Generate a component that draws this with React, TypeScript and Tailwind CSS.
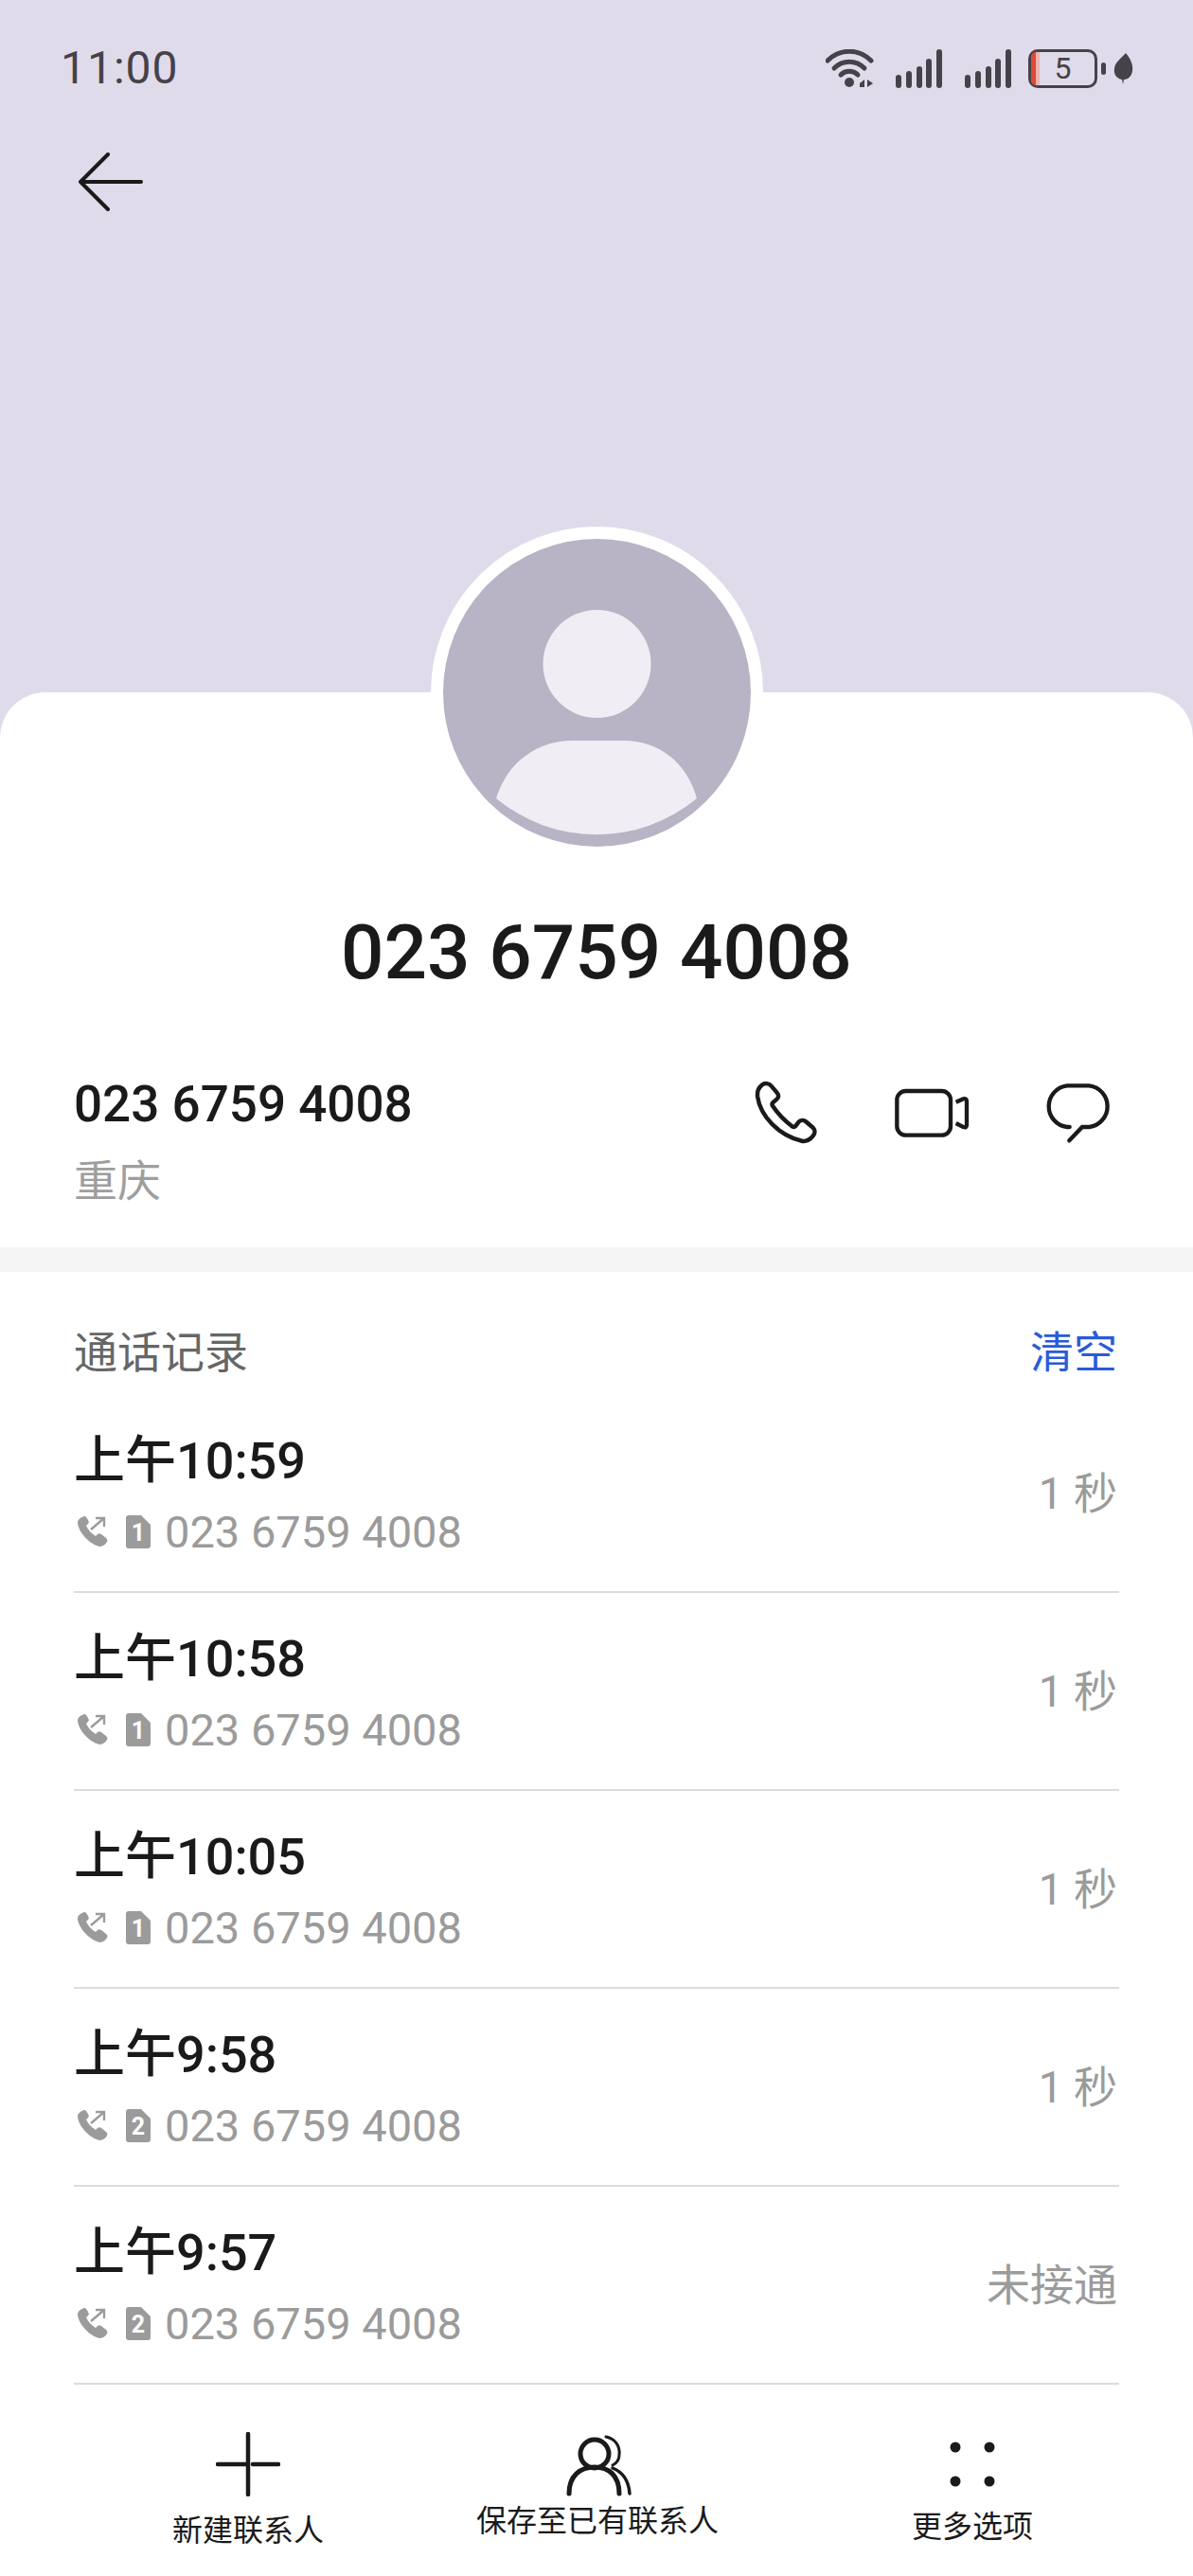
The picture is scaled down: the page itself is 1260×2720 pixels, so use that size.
import React from "react";

const rows = [
  { time: "上午10:59", sim: "1", dur: "1 秒" },
  { time: "上午10:58", sim: "1", dur: "1 秒" },
  { time: "上午10:05", sim: "1", dur: "1 秒" },
  { time: "上午9:58", sim: "2", dur: "1 秒" },
  { time: "上午9:57", sim: "2", dur: "未接通" },
];

const Signal = () => (
  <svg width="50" height="41" viewBox="0 0 50 41" fill="#45424a">
    <rect x="0" y="27" width="6" height="14" rx="3" />
    <rect x="11" y="23" width="6" height="18" rx="3" />
    <rect x="22" y="18" width="6" height="23" rx="3" />
    <rect x="32" y="10" width="6" height="31" rx="3" />
    <rect x="43" y="0" width="6" height="41" rx="3" />
  </svg>
);

const Wifi = () => (
  <svg width="52" height="41" viewBox="0 0 52 41" fill="none" stroke="#45424a" strokeLinecap="round">
    <path d="M2 12 C15 -1 35 -1 48 12" strokeWidth="5" />
    <path d="M9 20 C18 11 32 11 41 20" strokeWidth="5" />
    <path d="M16 27 C21 22 29 22 34 27" strokeWidth="5" />
    <circle cx="25" cy="35" r="5" fill="#45424a" stroke="none" />
    <path d="M36 36 L41 32 V40 H36 Z M44 32 L50 36 L44 40 Z" fill="#45424a" stroke="none" />
  </svg>
);

const Leaf = () => (
  <svg width="21" height="33" viewBox="0 0 21 33" fill="#45424a">
    <path d="M13 0 C18 6 21 12 20 19 C19 25 15 28 11 28 L10 33 L9 28 C3 27 0 22 1 16 C2 9 8 6 13 0 Z" />
  </svg>
);

const CallOut = () => (
  <svg width="34" height="34" viewBox="0 0 34 34" fill="#9b9b9b" stroke="#9b9b9b">
    <path
      d="M8 1 C5 2 1 4 1 8 C2 18 13 30 24 33 C28 33 31 30 32 28 C33 26 32 25 31 24 L26 20 C24 19 23 19 22 20 L20 22 C15 19 12 15 10 11 L12 9 C13 8 13 7 12 5 L10 2 C9.5 1 9 1 8 1 Z"
      stroke="none"
    />
    <path d="M15 15 L29 3 M20 3 H29 V12" fill="none" strokeWidth="2.4" />
  </svg>
);

const Sim = ({ n }: { n: string }) => (
  <div className="relative h-[35px] w-[26px]">
    <svg width="26" height="35" viewBox="0 0 26 35" fill="#9b9b9b" className="block">
      <path d="M3 0 H16 L26 10 V32 C26 34 25 35 23 35 H3 C1 35 0 34 0 32 V3 C0 1 1 0 3 0 Z" />
    </svg>
    <span className="absolute inset-0 flex items-center justify-center pt-[3px] text-[25px] leading-none font-bold text-white">
      {n}
    </span>
  </div>
);

export default function App() {
  return (
    <div className="flex h-[2720px] w-[1260px] flex-col overflow-hidden bg-[#e0dbea] font-['Roboto','Noto_Sans_CJK_SC',sans-serif] text-[#1a1a1a]">
      {/* purple header */}
      <div className="h-[731px] shrink-0">
        <div className="flex items-center justify-between pt-[51px] pr-[63px] pl-[64px]">
          <span className="text-[48px] leading-[42px] tracking-[1px] text-[#45424a]">11:00</span>
          <div className="flex items-center">
            <Wifi />
            <div className="ml-[22px]">
              <Signal />
            </div>
            <div className="ml-[23px]">
              <Signal />
            </div>
            <div className="relative ml-[17px] flex h-[41px] w-[73px] items-center justify-center rounded-[10px] border-[3px] border-[#45424a]">
              <div className="absolute top-0 bottom-0 left-0 w-[5px] rounded-l-[6px] bg-[#dc4a38]" />
              <div className="absolute top-0 bottom-0 left-[5px] w-[4px] bg-[#ecb4ae]" />
              <span className="text-[32px] leading-none text-[#45424a]">5</span>
            </div>
            <div className="ml-[4px] h-[13px] w-[5px] rounded-[3px] bg-[#45424a]" />
            <div className="ml-[8px]">
              <Leaf />
            </div>
          </div>
        </div>
        <div className="mt-[68px] ml-[83px]">
          <svg width="68" height="62" viewBox="0 0 68 62" fill="none" stroke="#1a1a1a" strokeWidth="4" strokeLinecap="round" strokeLinejoin="round">
            <path d="M31 2 L2 31 L31 60 M2 31 H66" />
          </svg>
        </div>
      </div>

      {/* white card */}
      <div className="flex flex-1 flex-col rounded-t-[48px] bg-white">
        <div className="-mt-[175px] flex justify-center">
          <div className="h-[351px] w-[351px] overflow-hidden rounded-full border-[13px] border-white bg-[#b9b3c6]">
            <svg width="325" height="325" viewBox="0 0 325 325" className="block">
              <circle cx="162.5" cy="132" r="57" fill="#f0eef4" />
              <path d="M56 274 C68 235 100 213 137 213 H190 C227 213 257 235 268 274 A166 166 0 0 1 56 274 Z" fill="#f0eef4" />
            </svg>
          </div>
        </div>

        <div className="mt-[49px] flex h-[100px] items-center justify-center text-[80px] leading-none font-medium">
          023 6759 4008
        </div>

        <div className="mt-[79px] flex h-[182px] items-start justify-between pr-[81px] pl-[78px]">
          <div>
            <div className="mt-[1px] text-[53px] leading-[60px] font-medium">023 6759 4008</div>
            <div className="mt-[21px] text-[46px] leading-[60px] text-[#9e9e9e]">重庆</div>
          </div>
          <div className="mt-[4px] flex items-center">
            <svg width="73" height="73" viewBox="100 80 220 220" fill="none" stroke="#1a1a1a" strokeWidth="13.5" strokeLinejoin="round">
              <path d="M135 100 C145 92 158 95 165 103 L183 124 C190 132 189 140 182 146 L170 156 C168 158 167 162 169 166 C185 190 205 212 232 232 C236 234 240 233 242 231 L252 218 C258 211 268 210 276 217 L298 236 C305 243 305 254 298 262 C290 272 280 280 265 279 C190 262 130 200 121 135 C120 120 125 108 135 100 Z" />
            </svg>
            <svg className="ml-[78px]" width="80" height="60" viewBox="560 100 240 180" fill="none" stroke="#1a1a1a" strokeWidth="13" strokeLinecap="round">
              <rect x="570" y="118" width="170" height="140" rx="28" />
              <path d="M757 153 L780 143 Q791 140 791 151 V225 Q791 236 780 232 L757 220" strokeLinecap="butt" />
            </svg>
            <svg className="ml-[77px]" width="78" height="70" viewBox="1036 90 234 210" fill="none" stroke="#1a1a1a" strokeWidth="13" strokeLinecap="round">
              <path d="M1122 237 H1114 A66 66 0 0 1 1114 106 H1184 A66 66 0 0 1 1184 237 H1162 L1121 280" />
            </svg>
          </div>
        </div>

        <div className="h-[26px] bg-[#f5f5f5]" />

        <div className="mt-[55px] flex h-[60px] items-center justify-between pr-[80px] pl-[78px] text-[46px] leading-none">
          <span className="text-[#666666]">通话记录</span>
          <span className="text-[#2a5bd7]">清空</span>
        </div>

        <div className="mt-[15px] ml-[78px] mr-[78px]">
          {rows.map((r) => (
            <div key={r.time} className="flex h-[209px] items-center justify-between border-b-2 border-[#dcdcdc]">
              <div className="flex h-full flex-col">
                <div className="mt-[40px] text-[54px] leading-[60px] font-medium">{r.time}</div>
                <div className="mt-[14px] flex h-[60px] items-center text-[47px] leading-none text-[#9b9b9b]">
                  <div className="ml-[3px]">
                    <CallOut />
                  </div>
                  <div className="ml-[18px]">
                    <Sim n={r.sim} />
                  </div>
                  <span className="ml-[15px]">023 6759 4008</span>
                </div>
              </div>
              <span className="pr-[2px] text-[46px] leading-none text-[#9b9b9b]">{r.dur}</span>
            </div>
          ))}
        </div>

        {/* bottom bar */}
        <div className="relative flex flex-1 items-start text-[32px] leading-none text-[#1a1a1a]">
          <div className="ml-[182px] flex w-[160px] flex-col items-center">
            <svg className="mt-[50px]" width="68" height="68" viewBox="0 0 68 68" fill="none" stroke="#1a1a1a" strokeWidth="5" strokeLinecap="round">
              <path d="M2 34 H32 M39 34 H66 M34 2 V66" strokeWidth="4.5" />
            </svg>
            <span className="mt-[20px] whitespace-nowrap">新建联系人</span>
          </div>
          <div className="ml-[161px] flex w-[256px] flex-col items-center">
            <svg className="mt-[44px]" width="90" height="85" viewBox="0 0 90 85" fill="none" stroke="#1a1a1a" strokeLinecap="round">
              <circle cx="42" cy="29" r="15" strokeWidth="5" />
              <path d="M15 71 C15 52 27 43 42 43 C57 43 68 52 68 71" strokeWidth="5" />
              <path d="M54 11 C64 13 69 21 68 30 C68 35 65 39 61 41" strokeWidth="3" />
              <path d="M61 44 C71 48 78 57 79 71" strokeWidth="3.5" />
            </svg>
            <span className="mt-[-1px] whitespace-nowrap">保存至已有联系人</span>
          </div>
          <div className="ml-[204px] flex w-[128px] flex-col items-center">
            <svg className="mt-[60px]" width="48" height="48" viewBox="0 0 48 48" fill="#1a1a1a">
              <circle cx="6" cy="6" r="5.5" />
              <circle cx="42" cy="6" r="5.5" />
              <circle cx="6" cy="42" r="5.5" />
              <circle cx="42" cy="42" r="5.5" />
            </svg>
            <span className="mt-[26px] whitespace-nowrap">更多选项</span>
          </div>
        </div>
      </div>
    </div>
  );
}
